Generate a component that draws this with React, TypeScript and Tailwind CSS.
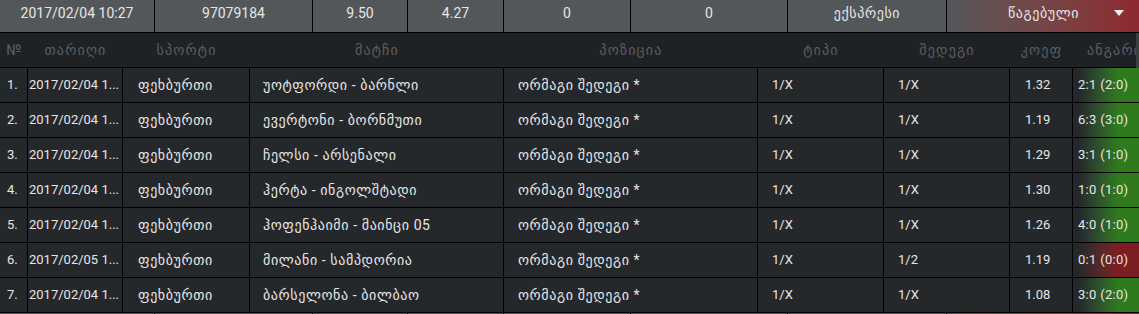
import { ReactNode } from "react";

type Row = {
  n: string;
  date: string;
  match: string;
  res: string;
  coef: string;
  score: string;
  won: boolean;
};

const rows: Row[] = [
  { n: "1.", date: "2017/02/04 1...", match: "უოტფორდი - ბარნლი", res: "1/X", coef: "1.32", score: "2:1 (2:0)", won: true },
  { n: "2.", date: "2017/02/04 1...", match: "ევერტონი - ბორნმუთი", res: "1/X", coef: "1.19", score: "6:3 (3:0)", won: true },
  { n: "3.", date: "2017/02/04 1...", match: "ჩელსი - არსენალი", res: "1/X", coef: "1.29", score: "3:1 (1:0)", won: true },
  { n: "4.", date: "2017/02/04 1...", match: "ჰერტა - ინგოლშტადი", res: "1/X", coef: "1.30", score: "1:0 (1:0)", won: true },
  { n: "5.", date: "2017/02/04 1...", match: "ჰოფენჰაიმი - მაინცი 05", res: "1/X", coef: "1.26", score: "4:0 (1:0)", won: true },
  { n: "6.", date: "2017/02/05 1...", match: "მილანი - სამპდორია", res: "1/2", coef: "1.19", score: "0:1 (0:0)", won: false },
  { n: "7.", date: "2017/02/04 1...", match: "ბარსელონა - ბილბაო", res: "1/X", coef: "1.08", score: "3:0 (2:0)", won: true },
];

const cols = "grid grid-cols-[28px_95px_127px_254px_254px_126px_126px_63px_100px]";
const geo = "text-[14px] tracking-[0.6px]";

function TopCell({ w, children }: { w: string; children: ReactNode }) {
  return (
    <div className={`${w} flex shrink-0 items-center justify-center border-r border-black pb-[6px]`}>
      {children}
    </div>
  );
}

function BetBar() {
  return (
    <div className="flex h-[33px] border-b border-black bg-[#53575a] text-[14px] text-[#e6e6e6]">
      <TopCell w="w-[155px]">2017/02/04 10:27</TopCell>
      <TopCell w="w-[158px]">97079184</TopCell>
      <TopCell w="w-[95px]">9.50</TopCell>
      <TopCell w="w-[96px]">4.27</TopCell>
      <TopCell w="w-[127px]">0</TopCell>
      <TopCell w="w-[157px]">0</TopCell>
      <TopCell w="w-[159px]">
        <span className="tracking-[0.6px]">ექსპრესი</span>
      </TopCell>
      <div className="relative flex w-[193px] shrink-0 items-center justify-center bg-linear-to-r from-[#53575a] to-[#8e2830] pb-[6px]">
        <span className="tracking-[0.6px]">წაგებული</span>
        <svg className="absolute right-[16px] top-[10px]" width="10" height="6" viewBox="0 0 10 6">
          <path d="M0 0h10L5 6z" fill="#f2f2f2" />
        </svg>
      </div>
    </div>
  );
}

function Cell({ children, className = "" }: { children: ReactNode; className?: string }) {
  return (
    <div className={`flex h-[35px] items-center overflow-hidden whitespace-nowrap border-b border-r border-black ${className}`}>
      {children}
    </div>
  );
}

export default function App() {
  const heads = ["თარიღი", "სპორტი", "მატჩი", "პოზიცია", "ტიპი", "შედეგი", "კოეფ", "ანგარიში"];
  return (
    <div className="relative h-[314px] w-[1139px] overflow-hidden bg-[#1f2225] font-['Roboto','DejaVu_Sans',sans-serif]">
      <BetBar />

      {/* header */}
      <div className={`${cols} h-[35px] border-b border-black bg-[#1f2225] text-[#5a5e62]`}>
        <div className="flex items-center justify-center text-[15px]">№</div>
        {heads.map((h) => (
          <div key={h} className="flex items-center justify-center overflow-hidden whitespace-nowrap text-[14px] tracking-[1.2px]">
            {h}
          </div>
        ))}
      </div>

      {/* rows */}
      <div className="bg-[#25282b] text-[13px] text-[#e6e6e6]">
        {rows.map((r) => (
          <div key={r.n} className={cols}>
            <Cell className="pl-[7px]">{r.n}</Cell>
            <Cell className="pl-[1px]">{r.date}</Cell>
            <Cell className={`pl-[15px] ${geo}`}>ფეხბურთი</Cell>
            <Cell className={`pl-[13px] ${geo}`}>{r.match}</Cell>
            <Cell className={`pl-[14px] ${geo}`}>ორმაგი შედეგი *</Cell>
            <Cell className="pl-[14px]">1/X</Cell>
            <Cell className="pl-[14px]">{r.res}</Cell>
            <Cell className="pl-[15px]">{r.coef}</Cell>
            <Cell
              className={`pl-[5px] tracking-[0.3px] bg-linear-to-r from-[#25282b] from-[6%] to-[45%] ${
                r.won ? "to-[#2e7a1c]" : "to-[#7c1d22]"
              }`}
            >
              {r.score}
            </Cell>
          </div>
        ))}
      </div>

      <BetBar />

      {/* scrollbar */}
      <div className="absolute right-0 top-[33px] h-[35px] w-[3px] bg-[#3c3f42]" />
    </div>
  );
}
